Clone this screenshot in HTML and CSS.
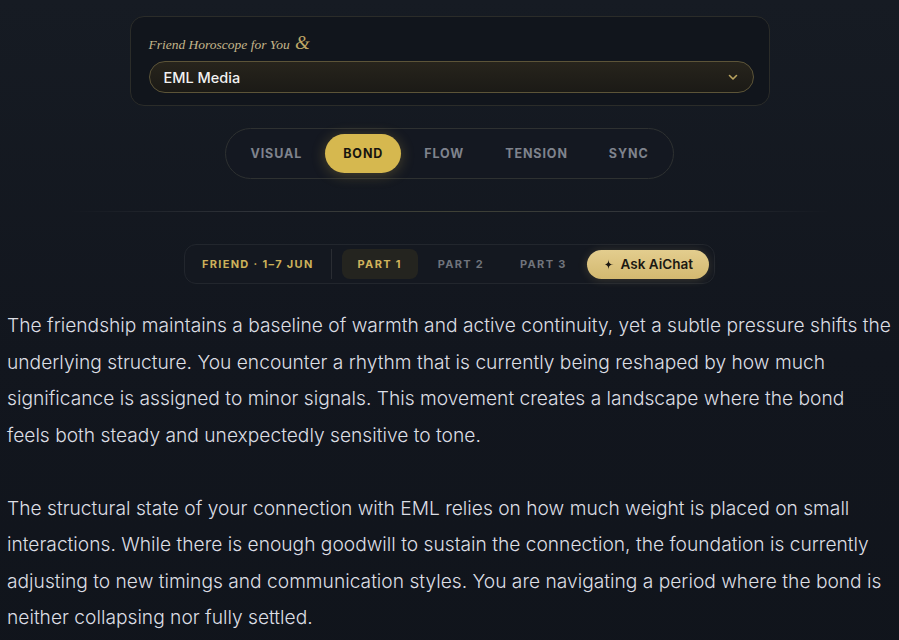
FILE: index.html
```html
<!DOCTYPE html>
<html lang="en">
<head>
  <meta charset="UTF-8" />
  <meta name="viewport" content="width=device-width, initial-scale=1.0"/>
  <title>Friend Horoscope</title>
  <link rel="stylesheet" href="styles.css">
</head>
<body>
  <div class="page">
    <section class="picker-card">
      <div class="picker-title">Friend Horoscope for You <span class="amp">&amp;</span></div>
      <div class="picker-select">
        <span>EML Media</span>
        <svg class="chevron" width="12" height="12" viewBox="0 0 12 12"><path d="M2.5 4.5 L6 8 L9.5 4.5" fill="none" stroke="currentColor" stroke-width="1.6" stroke-linecap="round" stroke-linejoin="round"/></svg>
      </div>
    </section>

    <nav class="mode-tabs">
      <button class="mode-tab">VISUAL</button>
      <button class="mode-tab active">BOND</button>
      <button class="mode-tab">FLOW</button>
      <button class="mode-tab">TENSION</button>
      <button class="mode-tab">SYNC</button>
    </nav>

    <hr class="divider">

    <div class="part-bar">
      <span class="part-label">FRIEND · 1–7 JUN</span>
      <span class="part-sep"></span>
      <button class="part-tab active">PART 1</button>
      <button class="part-tab">PART 2</button>
      <button class="part-tab">PART 3</button>
      <button class="ask-btn">
        <svg width="11" height="11" viewBox="0 0 12 12"><path d="M6 0.5 C6.3 4.6 7.4 5.7 11.5 6 C7.4 6.3 6.3 7.4 6 11.5 C5.7 7.4 4.6 6.3 0.5 6 C4.6 5.7 5.7 4.6 6 0.5 Z" fill="currentColor"/></svg>
        Ask AiChat
      </button>
    </div>

    <article class="reading">
      <p>The friendship maintains a baseline of warmth and active continuity, yet a subtle pressure shifts the underlying structure. You encounter a rhythm that is currently being reshaped by how much significance is assigned to minor signals. This movement creates a landscape where the bond feels both steady and unexpectedly sensitive to tone.</p>
      <p>The structural state of your connection with EML relies on how much weight is placed on small interactions. While there is enough goodwill to sustain the connection, the foundation is currently adjusting to new timings and communication styles. You are navigating a period where the bond is neither collapsing nor fully settled.</p>
    </article>
  </div>
</body>
</html>
```

FILE: styles.css
```css
body {
  margin: 0;
  min-height: 100vh;
  font-family: 'Inter', 'Noto Sans', sans-serif;
  color: #d6d8de;
  background: linear-gradient(180deg, #161b23 0%, #12161e 50%, #10141b 100%);
}
.page {
  padding: 16px 7px 40px;
  display: flex;
  flex-direction: column;
  align-items: center;
}
button {
  font-family: inherit;
  border: none;
  background: none;
  cursor: pointer;
}

/* friend picker */
.picker-card {
  box-sizing: border-box;
  width: 640px;
  padding: 14px 15px 12px 18px;
  background: #11151c;
  border: 1px solid #2b2c29;
  border-radius: 14px;
}
.picker-title {
  font-family: 'Liberation Serif', 'DejaVu Serif', serif;
  font-style: italic;
  font-size: 13.5px;
  color: #c4b58a;
  height: 24px;
  line-height: 24px;
  margin-bottom: 6px;
}
.amp {
  font-size: 19px;
  color: #bda565;
  margin-left: 2px;
}
.picker-select {
  height: 30px;
  padding: 0 14px;
  display: flex;
  align-items: center;
  justify-content: space-between;
  border: 1px solid #5c5438;
  border-radius: 16px;
  background: linear-gradient(180deg, #27241c 0%, #1b1a16 100%);
  color: #f2f2f2;
  font-size: 14.5px;
  font-weight: 500;
}
.chevron {
  color: #b9a35f;
}

/* reading modes */
.mode-tabs {
  margin-top: 22px;
  display: flex;
  gap: 5px;
  padding: 5px 6px;
  border: 1px solid #2e3131;
  border-radius: 26px;
  background: #141821;
}
.mode-tab {
  height: 39px;
  padding: 0 18px;
  border-radius: 20px;
  font-size: 12.5px;
  font-weight: 700;
  letter-spacing: 0.9px;
  color: #7f838d;
}
.mode-tab.active {
  background: #d6b84f;
  color: #17150f;
  box-shadow: 0 2px 14px rgba(214, 184, 79, 0.28);
}

.divider {
  width: 760px;
  margin: 32px 0 32px;
  border: none;
  height: 1px;
  background: linear-gradient(90deg, rgba(60, 64, 70, 0) 0%, #30343a 25%, #3f4136 50%, #30343a 75%, rgba(60, 64, 70, 0) 100%);
}

/* part switcher */
.part-bar {
  display: flex;
  align-items: center;
  padding: 4px 5px 4px 17px;
  height: 30px;
  border: 1px solid #22262d;
  border-radius: 12px;
  background: #141820;
}
.part-label {
  font-size: 11px;
  font-weight: 700;
  letter-spacing: 1.3px;
  color: #ccb15a;
}
.part-sep {
  width: 1px;
  height: 30px;
  background: #2a2d33;
  margin: 0 10px 0 17px;
}
.part-tab {
  height: 30px;
  padding: 0 16px;
  margin-right: 4px;
  border-radius: 8px;
  font-size: 11px;
  font-weight: 700;
  letter-spacing: 1.3px;
  color: #70747c;
}
.part-tab.active {
  background: #24241f;
  color: #d1b45c;
}
.ask-btn {
  height: 29px;
  padding: 0 16px;
  display: flex;
  align-items: center;
  gap: 7px;
  border-radius: 15px;
  background: linear-gradient(180deg, #e3cd8e 0%, #d3b970 100%);
  color: #1b1812;
  font-size: 13.5px;
  font-weight: 600;
  box-shadow: 0 1px 10px rgba(214, 190, 120, 0.2);
}

/* reading text */
.reading {
  align-self: stretch;
  margin-top: 23px;
}
.reading p {
  margin: 0 0 36.5px;
  font-size: 19.2px;
  font-weight: 300;
  line-height: 36.5px;
  color: #dcdee4;
}
```
